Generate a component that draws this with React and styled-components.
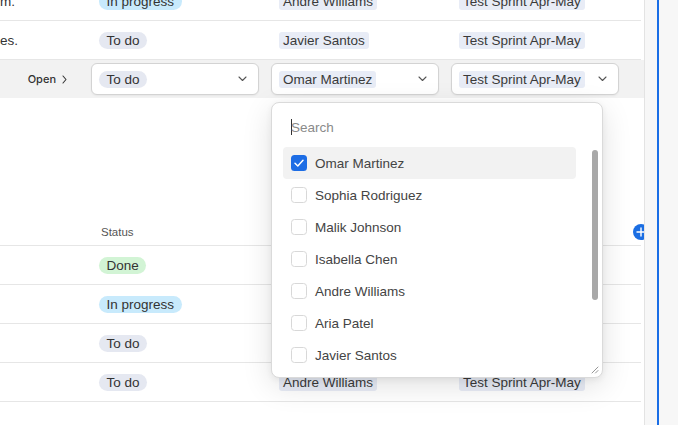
import React from "react";
import styled, { createGlobalStyle } from "styled-components";

const GlobalStyle = createGlobalStyle`
  html, body { margin: 0; padding: 0; width: 100%; height: 100%; overflow: hidden; background: #fff; }
  body { font-family: "Liberation Sans", Arial, sans-serif; font-size: 13.5px; color: #333; }
  #root { height: 100%; }
`;

const Page = styled.div`
  display: flex;
  height: 425px;
  width: 678px;
`;

const Main = styled.div`
  position: relative;
  flex: none;
  width: 644px;
  height: 100%;
  overflow: hidden;
  border-right: 1px solid #e3e3e3;
`;

const SidePanel = styled.div`
  flex: 1;
  background: #f7f7f7;
  padding-left: 12px;
  display: flex;
`;

const BlueLine = styled.div`
  width: 2px;
  background: #1a6ee6;
`;

const TopTable = styled.div`
  margin-top: -18px;
`;

const Row = styled.div`
  display: grid;
  grid-template-columns: 91px 180px 180px 180px 1fr;
  align-items: center;
  height: ${(p) => p.$h}px;
  ${(p) =>
    p.$selected
      ? "background: #f2f2f2;"
      : "margin-right: 3px; border-bottom: 1px solid #e6e6e6;"}
`;

const Cell = styled.div`
  display: flex;
  align-items: center;
  padding-left: ${(p) => (p.$flush ? 0 : 8)}px;
  white-space: nowrap;
  min-width: 0;
`;

const TitleCell = styled.div`
  white-space: nowrap;
  color: #333;
  overflow: hidden;
`;

const OpenCell = styled.div`
  display: flex;
  align-items: center;
  justify-content: flex-end;
  padding-right: 24px;
  gap: 6px;
  font-family: Inter, "Liberation Sans", sans-serif;
  font-size: 11px;
  font-weight: 500;
  color: #333;
`;

const badgeColors = {
  todo: "#e5e8f1",
  progress: "#c8eafc",
  done: "#d2f4d5",
};

const Badge = styled.span`
  display: inline-flex;
  align-items: center;
  height: 17px;
  padding: 0 7.5px;
  border-radius: 9px;
  background: ${(p) => badgeColors[p.$kind]};
  color: #333;
  line-height: 17px;
`;

const Tag = styled.span`
  display: inline-flex;
  align-items: center;
  height: 17px;
  padding: 0 4px;
  border-radius: 3px;
  background: #e8ecf6;
  color: #3a3a3a;
  line-height: 17px;
`;

const Select = styled.div`
  box-sizing: border-box;
  width: 168px;
  height: 32px;
  border: 1px solid #d3d3d3;
  border-radius: 6px;
  background: #fff;
  display: flex;
  align-items: center;
  justify-content: space-between;
  padding: 0 11px 0 7px;
  box-shadow: 0 1px 2px rgba(0, 0, 0, 0.05);
`;

const BottomTable = styled.div`
  margin-top: 121px;
`;

const HeaderLabel = styled.div`
  padding-left: 10px;
  font-size: 11.5px;
  color: #555;
`;

const PlusButton = styled.div`
  width: 16px;
  height: 16px;
  border-radius: 50%;
  background: #1b6ee3;
  margin-left: 2px;
  display: flex;
  align-items: center;
  justify-content: center;
  flex: none;
`;

const Dropdown = styled.div`
  position: absolute;
  left: 271px;
  top: 102px;
  width: 332px;
  height: 276px;
  box-sizing: border-box;
  border: 1px solid #dadada;
  border-radius: 8px;
  background: #fff;
  box-shadow: 0 8px 30px rgba(0, 0, 0, 0.12), 0 2px 6px rgba(0, 0, 0, 0.06);
  overflow: hidden;
`;

const Search = styled.div`
  height: 36px;
  margin: 6px 0 2px;
  padding-left: 19px;
  display: flex;
  align-items: center;
  color: #8a8a8a;
`;

const Caret = styled.span`
  width: 1px;
  height: 16px;
  background: #333;
  margin-right: -1px;
`;

const List = styled.div`
  padding: 0 26px 0 11px;
`;

const Item = styled.div`
  height: 32px;
  display: flex;
  align-items: center;
  gap: 8px;
  padding-left: 8px;
  border-radius: 4px;
  background: ${(p) => (p.$active ? "#f2f2f2" : "transparent")};
  color: #444;
`;

const Checkbox = styled.div`
  box-sizing: border-box;
  width: 16px;
  height: 16px;
  border-radius: 3.5px;
  flex: none;
  display: flex;
  align-items: center;
  justify-content: center;
  ${(p) =>
    p.$checked
      ? "background: #1d6de5; border: none;"
      : "background: #fff; border: 1.5px solid #d8d8d8;"}
`;

const ScrollThumb = styled.div`
  position: absolute;
  right: 4px;
  top: 47px;
  width: 6px;
  height: 150px;
  border-radius: 3px;
  background: #a8a8a8;
`;

const Resize = styled.svg`
  position: absolute;
  right: 3px;
  bottom: 3px;
`;

const Chevron = () => (
  <svg width="9" height="6" viewBox="0 0 9 6" fill="none">
    <polyline points="1,1 4.5,4.5 8,1" stroke="#555" strokeWidth="1.1" strokeLinecap="round" strokeLinejoin="round" />
  </svg>
);

const RightChevron = () => (
  <svg width="5" height="9" viewBox="0 0 5 9" fill="none">
    <polyline points="1,1 4,4.5 1,8" stroke="#333" strokeWidth="1.1" strokeLinecap="round" strokeLinejoin="round" />
  </svg>
);

const Check = () => (
  <svg width="16" height="16" viewBox="0 0 16 16" fill="none">
    <polyline points="4,8.3 6.8,11 12,5.2" stroke="#fff" strokeWidth="1.5" strokeLinecap="round" strokeLinejoin="round" />
  </svg>
);

const Plus = () => (
  <svg width="10" height="10" viewBox="0 0 10 10">
    <path d="M5 1v8M1 5h8" stroke="#fff" strokeWidth="1.4" strokeLinecap="round" />
  </svg>
);

const statusLabel = { todo: "To do", progress: "In progress", done: "Done" };
const SPRINT = "Test Sprint Apr-May";

const topRows = [
  { title: "m.", status: "progress", who: "Andre Williams" },
  { title: "es.", status: "todo", who: "Javier Santos" },
];

const bottomRows = [
  { status: "done", who: "Sophia Rodriguez" },
  { status: "progress", who: "Malik Johnson" },
  { status: "todo", who: "Isabella Chen" },
  { status: "todo", who: "Andre Williams" },
];

const people = [
  "Omar Martinez",
  "Sophia Rodriguez",
  "Malik Johnson",
  "Isabella Chen",
  "Andre Williams",
  "Aria Patel",
  "Javier Santos",
];

export default function App() {
  return (
    <>
      <GlobalStyle />
      <Page>
        <Main>
          <TopTable>
            {topRows.map((r) => (
              <Row key={r.title} $h={38}>
                <TitleCell>{r.title}</TitleCell>
                <Cell>
                  <Badge $kind={r.status}>{statusLabel[r.status]}</Badge>
                </Cell>
                <Cell>
                  <Tag>{r.who}</Tag>
                </Cell>
                <Cell>
                  <Tag>{SPRINT}</Tag>
                </Cell>
                <div />
              </Row>
            ))}
            <Row $selected $h={38}>
              <OpenCell>
                Open <RightChevron />
              </OpenCell>
              <Cell $flush>
                <Select>
                  <Badge $kind="todo">To do</Badge>
                  <Chevron />
                </Select>
              </Cell>
              <Cell $flush>
                <Select>
                  <Tag>Omar Martinez</Tag>
                  <Chevron />
                </Select>
              </Cell>
              <Cell $flush>
                <Select>
                  <Tag>{SPRINT}</Tag>
                  <Chevron />
                </Select>
              </Cell>
              <div />
            </Row>
          </TopTable>

          <BottomTable>
            <Row $h={26}>
              <div />
              <HeaderLabel>Status</HeaderLabel>
              <div />
              <div />
              <Cell $flush>
                <PlusButton>
                  <Plus />
                </PlusButton>
              </Cell>
            </Row>
            {bottomRows.map((r, i) => (
              <Row key={i} $h={38}>
                <div />
                <Cell>
                  <Badge $kind={r.status}>{statusLabel[r.status]}</Badge>
                </Cell>
                <Cell>
                  <Tag>{r.who}</Tag>
                </Cell>
                <Cell>
                  <Tag>{SPRINT}</Tag>
                </Cell>
                <div />
              </Row>
            ))}
          </BottomTable>

          <Dropdown>
            <Search>
              <Caret />
              Search
            </Search>
            <List>
              {people.map((name, i) => (
                <Item key={name} $active={i === 0}>
                  <Checkbox $checked={i === 0}>{i === 0 && <Check />}</Checkbox>
                  {name}
                </Item>
              ))}
            </List>
            <ScrollThumb />
            <Resize width="9" height="9" viewBox="0 0 9 9">
              <path d="M8 2L2 8M8 5.5L5.5 8" stroke="#8a8a8a" strokeWidth="0.9" strokeLinecap="round" />
            </Resize>
          </Dropdown>
        </Main>
        <SidePanel>
          <BlueLine />
        </SidePanel>
      </Page>
    </>
  );
}
